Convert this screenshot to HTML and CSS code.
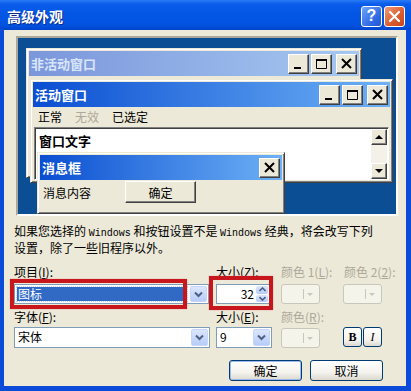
FILE: index.html
```html
<!DOCTYPE html>
<html lang="zh-CN">
<head>
    <meta charset="UTF-8">
    <title>高级外观</title>
    <link rel="stylesheet" href="styles.css">
</head>
<body>

    <div class="window">
        <!-- Barre de titre -->
        <div class="titlebar">
            <span class="title">高级外观</span>
            <span class="cap-btn help">?</span>
            <span class="cap-btn close">
                <svg width="13" height="13" viewBox="0 0 13 13"><path d="M2 2 L11 11 M11 2 L2 11" stroke="#fff" stroke-width="2.2" stroke-linecap="round"/></svg>
            </span>
        </div>

        <div class="client">
            <!-- Aperçu des fenêtres -->
            <div class="preview">
                <div class="mini inactive">
                    <div class="mini-title">
                        <span class="mini-caption">非活动窗口</span>
                        <span class="mini-btn"><svg width="19" height="18" viewBox="0 0 19 18"><rect x="5" y="12" width="7" height="2" fill="#000"/></svg></span>
                        <span class="mini-btn"><svg width="19" height="18" viewBox="0 0 19 18"><path d="M4.5 4.5 H14.5 V13.5 H4.5 Z" fill="none" stroke="#000"/><rect x="4" y="4" width="11" height="2" fill="#000"/></svg></span>
                        <span class="mini-btn gap"><svg width="19" height="18" viewBox="0 0 19 18"><path d="M5 4 L14 13 M14 4 L5 13" stroke="#000" stroke-width="2"/></svg></span>
                    </div>
                </div>

                <div class="mini active">
                    <div class="mini-title">
                        <span class="mini-caption">活动窗口</span>
                        <span class="mini-btn"><svg width="19" height="18" viewBox="0 0 19 18"><rect x="5" y="12" width="7" height="2" fill="#000"/></svg></span>
                        <span class="mini-btn"><svg width="19" height="18" viewBox="0 0 19 18"><path d="M4.5 4.5 H14.5 V13.5 H4.5 Z" fill="none" stroke="#000"/><rect x="4" y="4" width="11" height="2" fill="#000"/></svg></span>
                        <span class="mini-btn gap"><svg width="19" height="18" viewBox="0 0 19 18"><path d="M5 4 L14 13 M14 4 L5 13" stroke="#000" stroke-width="2"/></svg></span>
                    </div>
                    <div class="mini-menu">
                        <span>正常</span>
                        <span class="disabled">无效</span>
                        <span>已选定</span>
                    </div>
                    <div class="text-area">
                        <span class="window-text">窗口文字</span>
                        <div class="scrollbar">
                            <span class="scroll-btn"><svg width="14" height="14" viewBox="0 0 14 14"><path d="M3 9 L7 5 L11 9 Z" fill="#000"/></svg></span>
                            <span class="scroll-track"></span>
                            <span class="scroll-btn"><svg width="14" height="14" viewBox="0 0 14 14"><path d="M3 5 L7 9 L11 5 Z" fill="#000"/></svg></span>
                        </div>
                    </div>
                </div>

                <div class="mini msgbox">
                    <div class="mini-title">
                        <span class="mini-caption">消息框</span>
                        <span class="mini-btn"><svg width="19" height="18" viewBox="0 0 19 18"><path d="M5 4 L14 13 M14 4 L5 13" stroke="#000" stroke-width="2"/></svg></span>
                    </div>
                    <div class="msg-body">
                        <span class="msg-text">消息内容</span>
                        <span class="msg-ok">确定</span>
                    </div>
                </div>
            </div>

            <p class="desc">如果您选择的 <span class="latin">Windows</span> 和按钮设置不是 <span class="latin">Windows</span> 经典，将会改写下列<br>设置，除了一些旧程序以外。</p>

            <!-- Formulaire -->
            <div class="form">
                <span class="lbl">项目(<u>I</u>):</span>
                <span class="lbl">大小(<u>Z</u>):</span>
                <span class="lbl gray">颜色 1(<u>L</u>):</span>
                <span class="lbl gray">颜色 2(<u>2</u>):</span>

                <div class="cell">
                    <div class="combo wide">
                        <span class="combo-value"><span class="selected">图标</span></span>
                        <span class="drop"><svg width="9" height="7" viewBox="0 0 9 7"><path d="M1 1.5 L4.5 5 L8 1.5" fill="none" stroke="#4D6185" stroke-width="2"/></svg></span>
                    </div>
                    <span class="mark mark-item"></span>
                </div>
                <div class="cell">
                    <div class="spin">
                        <span class="spin-value">32</span>
                        <span class="spin-btns">
                            <span class="spin-btn"><svg width="7" height="5" viewBox="0 0 7 5"><path d="M0.5 4 L3.5 1 L6.5 4" fill="none" stroke="#4D6185" stroke-width="1.6"/></svg></span>
                            <span class="spin-btn"><svg width="7" height="5" viewBox="0 0 7 5"><path d="M0.5 1 L3.5 4 L6.5 1" fill="none" stroke="#4D6185" stroke-width="1.6"/></svg></span>
                        </span>
                    </div>
                    <span class="mark mark-size"></span>
                </div>
                <div class="cell">
                    <span class="color-btn"><svg width="12" height="12" viewBox="0 0 12 12"><path d="M1.5 1 V11" stroke="#C9C7BA"/><path d="M5 5 L8 8 L11 5 Z" fill="#C9C7BA"/></svg></span>
                </div>
                <div class="cell">
                    <span class="color-btn"><svg width="12" height="12" viewBox="0 0 12 12"><path d="M1.5 1 V11" stroke="#C9C7BA"/><path d="M5 5 L8 8 L11 5 Z" fill="#C9C7BA"/></svg></span>
                </div>

                <span class="lbl low">字体(<u>F</u>):</span>
                <span class="lbl low">大小(<u>E</u>):</span>
                <span class="lbl low gray">颜色(<u>R</u>):</span>
                <span></span>

                <div class="cell">
                    <div class="combo font">
                        <span class="combo-value plain">宋体</span>
                        <span class="drop"><svg width="9" height="7" viewBox="0 0 9 7"><path d="M1 1.5 L4.5 5 L8 1.5" fill="none" stroke="#4D6185" stroke-width="2"/></svg></span>
                    </div>
                </div>
                <div class="cell">
                    <div class="combo size">
                        <span class="combo-value plain">9</span>
                        <span class="drop"><svg width="9" height="7" viewBox="0 0 9 7"><path d="M1 1.5 L4.5 5 L8 1.5" fill="none" stroke="#4D6185" stroke-width="2"/></svg></span>
                    </div>
                </div>
                <div class="cell">
                    <span class="color-btn"><svg width="12" height="12" viewBox="0 0 12 12"><path d="M1.5 1 V11" stroke="#C9C7BA"/><path d="M5 5 L8 8 L11 5 Z" fill="#C9C7BA"/></svg></span>
                </div>
                <div class="cell style-btns">
                    <span class="style-btn bold">B</span>
                    <span class="style-btn italic">I</span>
                </div>
            </div>

            <div class="footer">
                <span class="xp-btn default">确定</span>
                <span class="xp-btn">取消</span>
            </div>
        </div>
    </div>

</body>
</html>
```

FILE: styles.css
```css
/* Page */
* {
    box-sizing: border-box;
}

body {
    margin: 0;
    font-family: "Noto Sans CJK SC", "Noto Sans", sans-serif;
    font-size: 12px;
    color: #000;
}

.window {
    width: 411px;
    height: 391px;
    background-color: #0A4BD8;
    display: flex;
    flex-direction: column;
}

/* Barre de titre */
.titlebar {
    height: 30px;
    display: flex;
    align-items: center;
    padding: 2px 6px 0 7px;
    background: linear-gradient(#2B7AF5, #0A5DEA 4px, #0356E4 50%, #0152DF 85%, #0044CC);
    color: #fff;
}

.title {
    flex: 1;
    font-size: 14px;
    font-weight: bold;
    text-shadow: 1px 1px #0B2A8A;
}

.cap-btn {
    width: 21px;
    height: 21px;
    margin-left: 2px;
    border: 1px solid #fff;
    border-radius: 3px;
    display: flex;
    align-items: center;
    justify-content: center;
    font-family: "Liberation Sans", sans-serif;
    font-size: 16px;
    font-weight: bold;
}

.help {
    background: linear-gradient(135deg, #6FA4FB, #2C66E2 70%, #2358D0);
}

.close {
    background: linear-gradient(135deg, #EE9C78, #DA5A2E 60%, #C9441A);
}

/* Zone cliente */
.client {
    flex: 1;
    margin: 0 5px 5px 4px;
    background-color: #ECE9D8;
    display: flex;
    flex-direction: column;
}

.preview {
    position: relative;
    height: 180px;
    margin: 6px 8px 0 12px;
    background-color: #0B4E94;
    border: 2px solid;
    border-color: #ACA899 #fff #fff #ACA899;
}

/* Fenêtres miniatures */
.mini {
    position: absolute;
    padding: 2px;
    background-color: #ECE9D8;
    border: 1px solid;
    border-color: #ECE9D8 #404040 #404040 #ECE9D8;
    box-shadow: inset 1px 1px #fff, inset -1px -1px #808080;
    display: flex;
    flex-direction: column;
}

.inactive {
    left: 8px;
    top: 10px;
    width: 336px;
    height: 130px;
}

.active {
    left: 12px;
    top: 41px;
    width: 363px;
    height: 104px;
}

.msgbox {
    left: 19px;
    top: 114px;
    width: 248px;
    height: 62px;
}

.mini-title {
    height: 25px;
    display: flex;
    align-items: center;
    padding: 0 2px 0 2px;
    font-size: 13px;
    font-weight: bold;
    color: #fff;
    background: linear-gradient(to right, #0A4ED2, #6DB1F6);
}

.inactive .mini-title {
    color: #D8E4F8;
    background: linear-gradient(to right, #7B96DB, #A6C8F1);
}

.mini-caption {
    flex: 1;
}

.mini-btn {
    width: 21px;
    height: 20px;
    margin-left: 2px;
    background-color: #ECE9D8;
    border: 1px solid;
    border-color: #fff #404040 #404040 #fff;
    box-shadow: inset -1px -1px #808080;
    display: flex;
}

.mini-btn.gap {
    margin-left: 4px;
}

.mini-menu {
    height: 19px;
    display: flex;
    align-items: center;
    gap: 13px;
    padding-left: 5px;
}

.mini-menu .disabled {
    color: #ACA899;
}

.text-area {
    flex: 1;
    margin: 1px 1px 0 1px;
    background-color: #fff;
    border: 1px solid;
    border-color: #808080 #fff #fff #808080;
    box-shadow: inset 1px 1px #404040;
    display: flex;
}

.window-text {
    flex: 1;
    padding: 3px 0 0 4px;
    font-size: 13px;
    font-weight: bold;
}

.scrollbar {
    width: 16px;
    margin: 1px 1px 0 0;
    display: flex;
    flex-direction: column;
}

.scroll-btn {
    height: 16px;
    background-color: #ECE9D8;
    border: 1px solid;
    border-color: #fff #404040 #404040 #fff;
    box-shadow: inset -1px -1px #808080;
    display: flex;
    align-items: center;
    justify-content: center;
}

.scroll-track {
    flex: 1;
    background-color: #F3F1E8;
}

.msg-body {
    flex: 1;
    display: flex;
    align-items: flex-start;
    padding-left: 3px;
}

.msg-text {
    margin-top: 4px;
    width: 82px;
}

.msg-ok {
    width: 71px;
    height: 22px;
    margin-top: 1px;
    background-color: #ECE9D8;
    border: 1px solid;
    border-color: #fff #404040 #404040 #fff;
    box-shadow: inset -1px -1px #808080;
    display: flex;
    align-items: center;
    justify-content: center;
}

/* Texte d'explication */
.desc {
    margin: 8px 0 0 10px;
    line-height: 14px;
    white-space: nowrap;
}

.latin {
    font-family: "Liberation Mono", monospace;
    font-size: 10px;
}

/* Formulaire */
.form {
    display: grid;
    grid-template-columns: 202px 65px 63px 1fr;
    grid-template-rows: 18px 22px 22px 21px;
    margin-top: 10px;
    padding-left: 10px;
}

.lbl {
    line-height: 14px;
    white-space: nowrap;
}

.lbl.low {
    padding-top: 5px;
}

.gray {
    color: #ACA899;
}

.cell {
    position: relative;
    display: flex;
}

.combo {
    height: 20px;
    margin-top: 1px;
    background-color: #fff;
    border: 1px solid #7F9DB9;
    display: flex;
}

.combo.wide {
    width: 195px;
}

.combo.font {
    width: 196px;
    height: 21px;
    margin-top: 0;
}

.combo.size {
    width: 56px;
    height: 21px;
    margin-top: 0;
}

.combo-value {
    flex: 1;
    padding: 2px;
    display: flex;
}

.combo-value.plain {
    padding: 0 0 0 3px;
    line-height: 18px;
}

.selected {
    flex: 1;
    padding-left: 1px;
    line-height: 14px;
    color: #fff;
    background-color: #316AC5;
    outline: 1px dotted #C9D6EE;
}

.drop {
    width: 17px;
    margin: 1px;
    border-radius: 2px;
    background: linear-gradient(#DCE6FD, #B7CCF7);
    border: 1px solid #C6D6FA;
    display: flex;
    align-items: center;
    justify-content: center;
}

.spin {
    width: 54px;
    height: 20px;
    margin-top: 1px;
    background-color: #fff;
    border: 1px solid #7F9DB9;
    display: flex;
}

.spin-value {
    flex: 1;
    text-align: right;
    padding-right: 2px;
    line-height: 18px;
}

.spin-btns {
    width: 13px;
    display: flex;
    flex-direction: column;
    gap: 1px;
    padding: 1px 1px 1px 0;
}

.spin-btn {
    flex: 1;
    border-radius: 2px;
    background: linear-gradient(#DCE6FD, #B7CCF7);
    display: flex;
    align-items: center;
    justify-content: center;
}

.color-btn {
    width: 39px;
    height: 20px;
    margin-top: 1px;
    padding-right: 5px;
    background-color: #F5F4EA;
    border: 1px solid #C9C7BA;
    border-radius: 3px;
    display: flex;
    align-items: center;
    justify-content: flex-end;
}

.form .cell:nth-child(8) .color-btn {
    margin-left: -1px;
}

.style-btns {
    gap: 1px;
    margin-left: -1px;
}

.style-btn {
    width: 19px;
    height: 20px;
    background: linear-gradient(#fff, #F2F1EC 70%, #DDD9CF);
    border: 1px solid #003C74;
    border-radius: 3px;
    display: flex;
    align-items: center;
    justify-content: center;
    font-family: "Liberation Serif", serif;
    font-size: 12px;
}

.style-btn.bold {
    font-weight: bold;
}

.style-btn.italic {
    font-style: italic;
}

/* Cadres rouges d'annotation */
.mark {
    position: absolute;
    border: 4px solid #C8161D;
    box-shadow: 0 0 1px #E8787C;
}

.mark-item {
    left: -4px;
    top: -4px;
    width: 177px;
    height: 30px;
}

.mark-size {
    left: -7px;
    top: -7px;
    width: 64px;
    height: 34px;
}

/* Boutons du bas */
.footer {
    display: flex;
    justify-content: flex-end;
    gap: 8px;
    margin-top: 12px;
    padding-right: 23px;
}

.xp-btn {
    width: 73px;
    height: 21px;
    background: linear-gradient(#fff, #F4F3EE 60%, #DCD8CD);
    border: 1px solid #003C74;
    border-radius: 3px;
    display: flex;
    align-items: center;
    justify-content: center;
}

.xp-btn.default {
    box-shadow: inset 0 0 0 1px #9DBAF0;
}
```
